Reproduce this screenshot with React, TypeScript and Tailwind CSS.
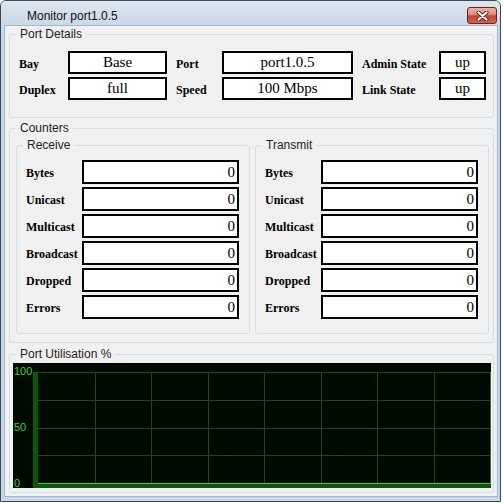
import React from 'react';

// --- DATA ---

const counterNames = ['Bytes', 'Unicast', 'Multicast', 'Broadcast', 'Dropped', 'Errors'];

const SANS = "font-['Liberation_Sans',Arial,sans-serif]";
const SERIF = "font-['Liberation_Serif','Times_New_Roman',serif]";

// --- COMPONENTS ---

// Vista style group box
const GroupBox: React.FC<{ title: string; className?: string; children: React.ReactNode }> = ({ title, className = '', children }) => (
  <fieldset className={`border border-[#d5dfe5] rounded-[3px] min-w-0 ${className}`}>
    <legend className={`ml-[6px] px-[4px] text-[12px] leading-[14px] text-[#1e1e1e] ${SANS}`}>{title}</legend>
    {children}
  </fieldset>
);

const ValueBox: React.FC<{ value: string; className?: string; align?: 'center' | 'right' }> = ({ value, className = '', align = 'center' }) => (
  <div
    className={`bg-white border-2 border-black flex items-center text-[15px] leading-none text-black ${SERIF} ${
      align === 'right' ? 'justify-end pr-[2px]' : 'justify-center'
    } ${className}`}
  >
    {value}
  </div>
);

const Label: React.FC<{ text: string; className?: string }> = ({ text, className = '' }) => (
  <div className={`font-bold text-[12px] leading-none pt-[2px] text-black ${SERIF} ${className}`}>{text}</div>
);

const CounterGroup: React.FC<{ title: string }> = ({ title }) => (
  <GroupBox title={title} className="w-[234px]">
    <div className="pt-[8px] pb-[14px] pl-[9px] flex flex-col gap-[3px]">
      {counterNames.map(name => (
        <div key={name} className="flex items-center">
          <Label text={name} className="w-[56px]" />
          <ValueBox value="0" align="right" className="w-[157px] h-[24px]" />
        </div>
      ))}
    </div>
  </GroupBox>
);

// Utilisation chart
const UtilChart: React.FC = () => {
  const top = 9;
  const bottom = 120;
  const left = 25;
  const right = 477;
  const cols = 8;
  const rows = 4;
  const colW = (right - left) / cols;
  const rowH = (bottom - top) / rows;

  return (
    <svg width="478" height="125" className="block bg-[#000a00]">
      {/* grid */}
      {Array.from({ length: cols }).map((_, i) => (
        <line
          key={`v${i}`}
          x1={Math.round(left + colW * (i + 1)) + 0.5}
          x2={Math.round(left + colW * (i + 1)) + 0.5}
          y1={top}
          y2={bottom}
          stroke={i === cols - 1 ? '#2f7a2f' : '#1d4a1d'}
          strokeWidth="1"
        />
      ))}
      {Array.from({ length: rows }).map((_, i) => (
        <line
          key={`h${i}`}
          x1={left}
          x2={right}
          y1={Math.round(top + rowH * i) + 0.5}
          y2={Math.round(top + rowH * i) + 0.5}
          stroke="#1d4a1d"
          strokeWidth="1"
        />
      ))}
      {/* axes */}
      <rect x="20" y={top} width="5" height={125 - top} fill="#0c560c" />
      <rect x="20" y={bottom} width={right - 20 + 1} height="5" fill="#0c560c" />
      <line x1={left} x2={right + 1} y1={bottom + 0.5} y2={bottom + 0.5} stroke="#44c944" strokeWidth="1" />
      {/* labels */}
      <g fill="#3fd03f" fontSize="11" fontFamily="'Liberation Sans', Arial, sans-serif">
        <text x="1" y="12">100</text>
        <text x="1" y="68">50</text>
        <text x="1" y="124">0</text>
      </g>
    </svg>
  );
};

export default function App() {
  return (
    <div className="w-[503px] h-[503px] bg-white">
      {/* window frame */}
      <div className="w-[501px] h-[502px] border border-[#3d4755] rounded-t-[6px] bg-[#c5d8ec] flex flex-col overflow-hidden">
        {/* title bar */}
        <div className="h-[24px] flex items-start justify-between bg-gradient-to-b from-[#dde6f0] to-[#cbd8e6]">
          <span className={`pl-[26px] pt-[8px] text-[12px] leading-[14px] text-[#111] ${SANS}`}>Monitor port1.0.5</span>
          <div className="mt-[6px] mr-[3px] w-[30px] h-[17px] rounded-[3px] border border-[#6b2519] bg-[linear-gradient(to_bottom,#eab4a7_0%,#dd8c79_45%,#c3432f_52%,#d0654e_100%)] flex items-center justify-center">
            <svg width="13" height="10" viewBox="0 0 13 10">
              <path d="M2.5 1.5 L10.5 8.5 M10.5 1.5 L2.5 8.5" stroke="#5a1c14" strokeWidth="4" strokeLinecap="round" />
              <path d="M2.5 1.5 L10.5 8.5 M10.5 1.5 L2.5 8.5" stroke="#ffffff" strokeWidth="2.2" strokeLinecap="round" />
            </svg>
          </div>
        </div>

        {/* client area */}
        <div className="flex-1 ml-[3px] mr-[2px] mb-[4px] border border-[#a3b8cd] bg-[#f0f0f0] pt-[1px] pl-[4px] pr-[3px] flex flex-col">
          {/* Port Details */}
          <GroupBox title="Port Details">
            <div className="pt-[10px] pb-[17px] pl-[9px] flex flex-col gap-[3px]">
              <div className="flex items-center">
                <Label text="Bay" className="w-[49px]" />
                <ValueBox value="Base" className="w-[99px] h-[23px]" />
                <Label text="Port" className="ml-[9px] w-[46px]" />
                <ValueBox value="port1.0.5" className="w-[131px] h-[23px]" />
                <Label text="Admin State" className="ml-[9px] w-[77px]" />
                <ValueBox value="up" className="w-[47px] h-[23px]" />
              </div>
              <div className="flex items-center">
                <Label text="Duplex" className="w-[49px]" />
                <ValueBox value="full" className="w-[99px] h-[23px]" />
                <Label text="Speed" className="ml-[9px] w-[46px]" />
                <ValueBox value="100 Mbps" className="w-[131px] h-[23px]" />
                <Label text="Link State" className="ml-[9px] w-[77px]" />
                <ValueBox value="up" className="w-[47px] h-[23px]" />
              </div>
            </div>
          </GroupBox>

          {/* Counters */}
          <GroupBox title="Counters" className="mt-[3px]">
            <div className="pt-[3px] pb-[8px] pl-[6px] pr-[3px] flex gap-[5px]">
              <CounterGroup title="Receive" />
              <CounterGroup title="Transmit" />
            </div>
          </GroupBox>

          {/* Port Utilisation */}
          <GroupBox title="Port Utilisation %" className="mt-[4px]">
            <div className="pt-[2px] pb-[4px] pl-[3px]">
              <UtilChart />
            </div>
          </GroupBox>
        </div>
      </div>
    </div>
  );
}
